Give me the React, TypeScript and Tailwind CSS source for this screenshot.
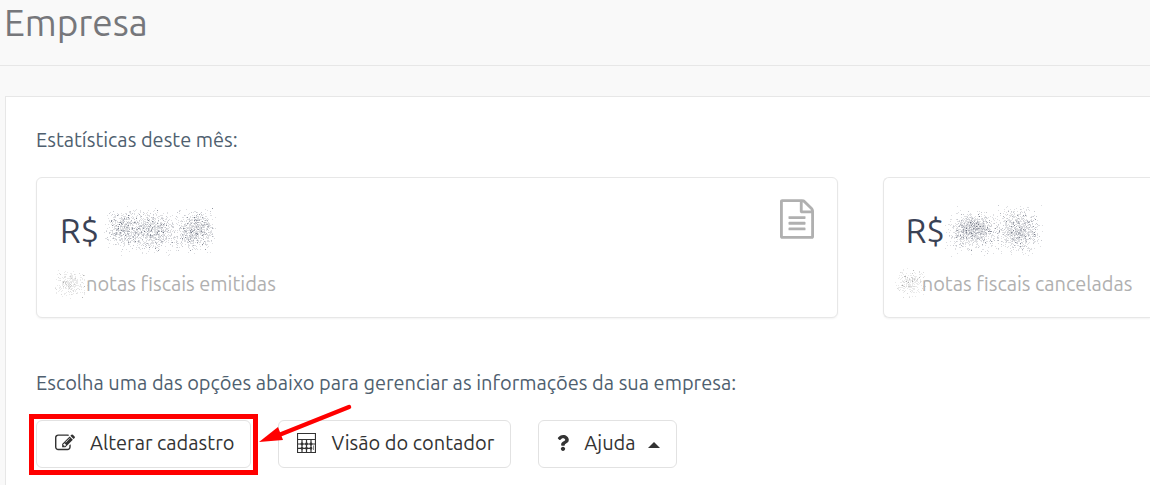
import type { ReactNode } from 'react';
import { FaQuestion } from 'react-icons/fa';

type Blob = { x: number; y: number; rx: number; ry: number; dots: number };

type SmudgeProps = {
  width: number;
  height: number;
  color: string;
  seed: number;
  blobs: Blob[];
  className: string;
};

// Scatters single pixel dots around each blob, always in the same places
function scatter(blobs: Blob[], seed: number) {
  let state = seed;
  const random = () => {
    state = (state * 16807) % 2147483647;
    return state / 2147483647;
  };
  const spread = () => (random() + random() + random()) / 1.5 - 1;
  const layers = ['', '', ''];

  blobs.forEach((blob) => {
    for (let i = 0; i < blob.dots; i++) {
      const x = Math.round(blob.x + spread() * blob.rx);
      const y = Math.round(blob.y + spread() * blob.ry);
      const pick = random();
      layers[pick < 0.8 ? 0 : pick < 0.97 ? 1 : 2] += `M${x} ${y}h1v1h-1z`;
    }
  });
  return layers;
}

function Smudge({ width, height, color, seed, blobs, className }: SmudgeProps) {
  const [faint, medium, strong] = scatter(blobs, seed);

  return (
    <svg width={width} height={height} fill={color} shapeRendering="crispEdges" aria-hidden="true" className={className}>
      <path d={faint} opacity="0.17" />
      <path d={medium} opacity="0.28" />
      <path d={strong} opacity="0.55" />
    </svg>
  );
}

function FileIcon() {
  return (
    <svg viewBox="0 0 1536 1792" fill="currentColor" aria-hidden="true" className="h-10 w-[34px] text-[#b0b0b0]">
      <path d="M1468 380q28 28 48 76t20 88v1152q0 40-28 68t-68 28H96q-40 0-68-28t-28-68V96q0-40 28-68T96 0h896q40 0 88 20t76 48zm-444-244v376h376q-10-29-22-41l-313-313q-12-12-41-22zm384 1528V640H992q-40 0-68-28t-28-68V128H128v1536h1280zM384 800q0-14 9-23t23-9h704q14 0 23 9t9 23v64q0 14-9 23t-23 9H416q-14 0-23-9t-9-23v-64zm736 224q14 0 23 9t9 23v64q0 14-9 23t-23 9H416q-14 0-23-9t-9-23v-64q0-14 9-23t23-9h704zm0 256q14 0 23 9t9 23v64q0 14-9 23t-23 9H416q-14 0-23-9t-9-23v-64q0-14 9-23t23-9h704z" />
    </svg>
  );
}

function EditIcon() {
  return (
    <svg viewBox="0 0 1792 1792" fill="currentColor" aria-hidden="true" className="h-5 w-5">
      <path d="M888 1184l116-116-152-152-116 116v56h96v96h56zm440-720q-16-16-33 1L945 815q-17 17-1 33t33-1l350-350q17-17 1-33zm80 594v190q0 119-84.5 203.5T1120 1536H288q-119 0-203.5-84.5T0 1248V416q0-119 84.5-203.5T288 128h832q63 0 117 25 15 7 18 23 3 17-9 29l-49 49q-14 14-32 8-23-6-45-6H288q-66 0-113 47t-47 113v832q0 66 47 113t113 47h832q66 0 113-47t47-113v-126q0-13 9-22l64-64q15-15 35-7t20 29zm-96-738l288 288-672 672H640V992zm444 132l-92 92-288-288 92-92q28-28 68-28t68 28l152 152q28 28 28 68t-28 68z" />
    </svg>
  );
}

function CalculatorIcon() {
  return (
    <svg viewBox="0 0 19 20" fill="none" stroke="currentColor" aria-hidden="true" className="h-5 w-[19px]">
      <path d="M0.5 0.5h18v19h-18z" strokeWidth="1.2" />
      <path d="M1 6.5h17M1 11h14M1 15.3h14M5 6.5v13M9.5 6.5v13M14 6.5v13M14 11h4.5" strokeWidth="1.2" />
      <path d="M16.5 12.5v4.5" opacity="0.6" />
      <path d="M5 11h.01M9.5 11h.01M14 11h.01M5 15.3h.01M9.5 15.3h.01M14 15.3h.01" strokeWidth="2.8" strokeLinecap="round" />
    </svg>
  );
}

function StatCard({ children, className }: { children: ReactNode; className: string }) {
  return (
    <section className={`relative h-[141px] min-w-0 border border-[#e7e7e7] bg-white pt-[33px] whitespace-nowrap shadow-xs ${className}`}>
      {children}
    </section>
  );
}

function ActionButton({ children }: { children: ReactNode }) {
  return (
    <button
      type="button"
      className="flex h-12 shrink-0 items-center rounded-md border border-[#e2e2e2] bg-white pr-4 pb-0.5 pl-[18px] text-[20px] leading-6 whitespace-nowrap text-[#333]"
    >
      {children}
    </button>
  );
}

export default function App() {
  return (
    <div className="min-h-screen overflow-hidden bg-[#f9f9f9] font-['Ubuntu','Noto_Sans',sans-serif]">
      <header className="h-[66px] border-b border-[#e7e7e7] pl-1">
        <h1 className="text-[37px] leading-[46px] text-[#76777b]">Empresa</h1>
      </header>

      <main className="mt-[30px] ml-[5px] min-h-[389px] border-t border-l border-[#e7e7e7] bg-white pt-[30px] pl-[30px]">
        <p className="text-[20px] leading-[26px] text-[#4f5f6f]">Estatísticas deste mês:</p>

        <div className="mt-6 grid grid-cols-[3fr_1fr] gap-[45px]">
          <StatCard className="rounded-md pl-[23px]">
            <p className="text-[33px] leading-10 text-[#3a4255]">R$</p>
            <p className="mt-5 pl-[26px] text-[20px] leading-[26px] text-[#b0b0b0]">notas fiscais emitidas</p>
            <div className="absolute top-[21px] right-[23px]">
              <FileIcon />
            </div>
            <Smudge
              width={124}
              height={52}
              color="#3a4255"
              seed={731}
              className="absolute top-[28px] left-[62px]"
              blobs={[
                { x: 24, y: 23, rx: 22, ry: 24, dots: 520 },
                { x: 50, y: 25, rx: 38, ry: 27, dots: 1000 },
                { x: 96, y: 24, rx: 26, ry: 26, dots: 850 },
              ]}
            />
            <Smudge
              width={36}
              height={30}
              color="#808080"
              seed={92}
              className="absolute top-[91px] left-[16px]"
              blobs={[{ x: 17, y: 14, rx: 20, ry: 17, dots: 300 }]}
            />
          </StatCard>

          <StatCard className="rounded-l-md border-r-0 pl-[22px]">
            <p className="text-[33px] leading-10 text-[#3a4255]">R$</p>
            <p className="mt-5 pl-4 text-[20px] leading-[26px] text-[#b0b0b0]">notas fiscais canceladas</p>
            <Smudge
              width={106}
              height={54}
              color="#3a4255"
              seed={4177}
              className="absolute top-[25px] left-[57px]"
              blobs={[
                { x: 33, y: 25, rx: 22, ry: 15, dots: 650 },
                { x: 32, y: 28, rx: 34, ry: 27, dots: 750 },
                { x: 77, y: 27, rx: 28, ry: 28, dots: 950 },
              ]}
            />
            <Smudge
              width={32}
              height={30}
              color="#808080"
              seed={555}
              className="absolute top-[90px] left-[11px]"
              blobs={[{ x: 15, y: 14, rx: 18, ry: 17, dots: 250 }]}
            />
          </StatCard>
        </div>

        <p className="mt-[52px] text-[20px] leading-[26px] whitespace-nowrap text-[#4f5f6f]">
          Escolha uma das opções abaixo para gerenciar as informações da sua empresa:
        </p>

        <div className="relative mt-6 flex gap-[27px]">
          <ActionButton>
            <EditIcon />
            <span className="ml-[15px]">Alterar cadastro</span>
          </ActionButton>
          <ActionButton>
            <CalculatorIcon />
            <span className="ml-[15px]">Visão do contador</span>
          </ActionButton>
          <ActionButton>
            <FaQuestion className="h-4 w-3" />
            <span className="ml-[15px]">Ajuda</span>
            <svg viewBox="0 0 12 6" fill="currentColor" aria-hidden="true" className="mt-1 ml-3 h-1.5 w-3">
              <path d="M0 6l6-6 6 6z" />
            </svg>
          </ActionButton>

          {/* highlight around the first button */}
          <div className="pointer-events-none absolute -top-[6px] -left-[7px] h-[61px] w-[229px] border-5 border-[#ff0000]" />
          <svg
            width="100"
            height="46"
            viewBox="0 0 100 46"
            aria-hidden="true"
            className="pointer-events-none absolute -top-[18px] left-[221px]"
          >
            <path d="M92 5L22 33" stroke="#ff0000" strokeWidth="4.5" strokeLinecap="round" />
            <path d="M2 40L21 25l5 13z" fill="#ff0000" />
          </svg>
        </div>
      </main>
    </div>
  );
}
